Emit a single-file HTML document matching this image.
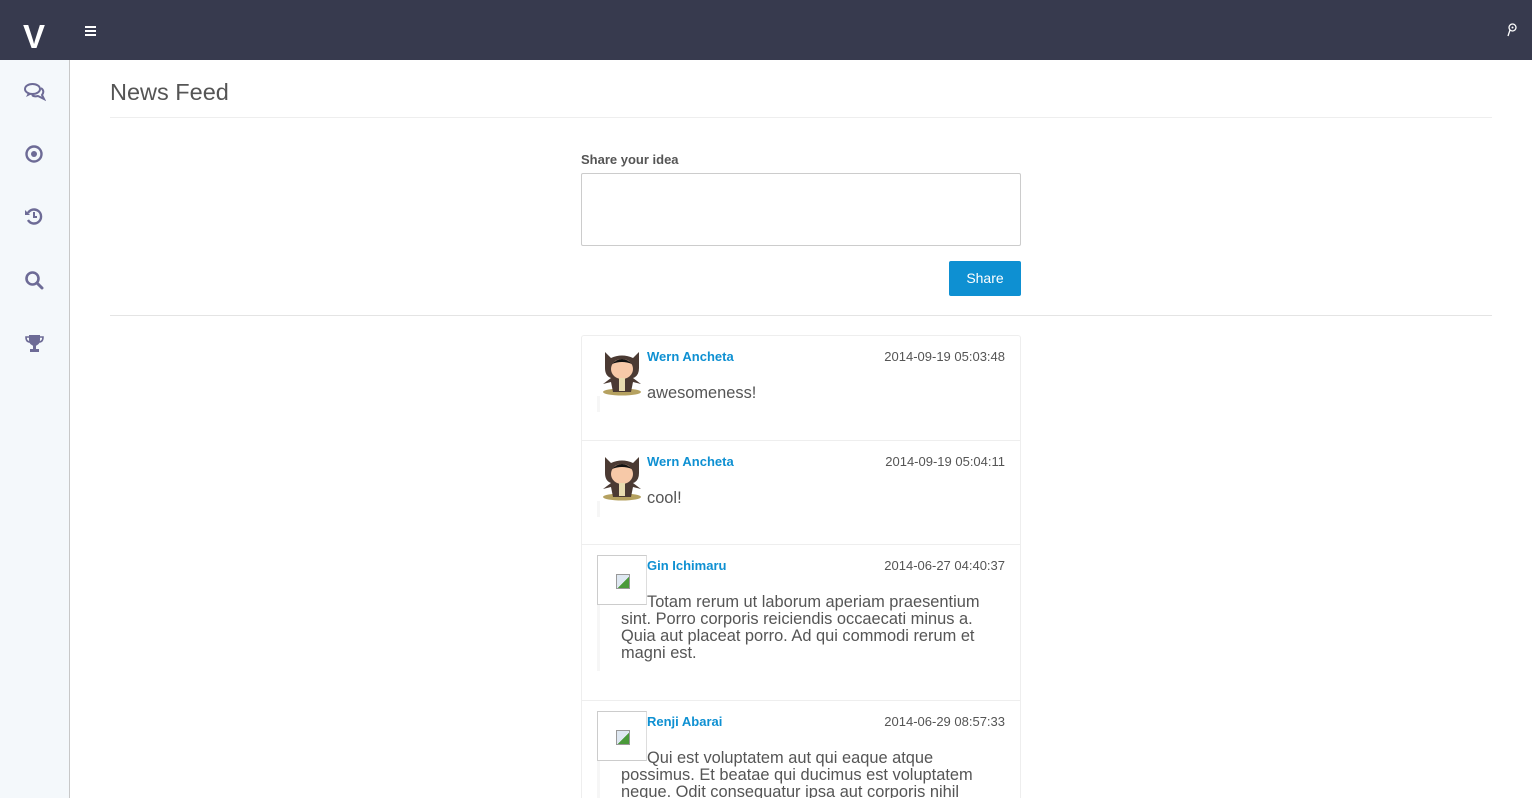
<!DOCTYPE html>
<html style="width:1532px;height:798px;overflow:hidden"><head><meta charset="utf-8"><style>
*{box-sizing:border-box;margin:0;padding:0}
body{width:1532px;height:798px;overflow:hidden;background:#fff;font-family:"Liberation Sans",sans-serif;color:#555;position:relative}
.top{position:absolute;left:0;top:0;width:1532px;height:60px;background:#373a4e}
.logo{position:absolute;left:23px;top:19px;color:#fff;font-weight:bold;font-size:33px;line-height:36px}
.burger{position:absolute;left:85px;top:26px;width:11px}
.burger i{display:block;height:2px;background:#fff;margin-bottom:2px}
.side{position:absolute;left:0;top:60px;width:70px;height:738px;background:#f4f8fb;border-right:1px solid #c8c8c8}
.side svg{position:absolute;left:24px}
h1{position:absolute;left:110px;top:79px;font-size:23.5px;font-weight:normal;color:#555}
.hr{position:absolute;left:110px;width:1382px;height:1px;background:#eee}
label{position:absolute;left:581px;top:152px;font-size:13px;font-weight:bold;color:#555}
.ta{position:absolute;left:581px;top:173px;width:440px;height:73px;border:1px solid #ccc;border-radius:2px}
.btn{position:absolute;left:949px;top:261px;width:72px;height:35px;background:#0e90d2;color:#fff;font-size:14px;text-align:center;line-height:35px;border-radius:2px}
.list{position:absolute;left:581px;top:335px;width:440px;height:463px;overflow:hidden;border:1px solid #eee;border-bottom:none;border-radius:3px 3px 0 0}
.item{position:absolute;left:0;width:438px;border-bottom:1px solid #eee}
.av{position:absolute;left:15px;top:10px;width:50px;height:50px}
.av.b{border:1px solid #ccc;border-right-color:#ddd}
.av.b::after{content:"";position:absolute;left:18px;top:18px;width:12px;height:13px;background:linear-gradient(135deg,#dfe8f2 55%,#4a9a3a 55%);border:1px solid #999}
.name{position:absolute;left:65px;top:13px;font-size:13px;font-weight:bold;color:#0e90d2}
.date{position:absolute;right:15px;top:13px;font-size:13px;color:#555}
.msg{position:absolute;left:39px;top:49px;width:375px;font-size:16.4px;line-height:17px;text-indent:26px;color:#555}
.bar{position:absolute;left:15px;width:3px;background:#f6f6f6}
</style></head><body>
<div class="top"><div class="logo">V</div><div class="burger"><i></i><i></i><i></i></div>
<svg style="position:absolute;left:1507px;top:23px" width="10" height="14" viewBox="0 0 10 14"><circle cx="5.5" cy="4.5" r="3.5" fill="none" stroke="#fff" stroke-width="1.3"/><path d="M3 7 L1 13" stroke="#fff" stroke-width="1.3"/><circle cx="5.5" cy="4.5" r="1" fill="#fff"/></svg></div>
<div class="side">
<svg style="top:22px" width="22" height="20" viewBox="0 0 22 20"><ellipse cx="8.5" cy="7" rx="7.5" ry="5" fill="none" stroke="#6d6b96" stroke-width="2"/><path d="M4 11 L2 15 L8 12" fill="#6d6b96"/><path d="M17 6 Q21 9 18 13 L20 17 L14 14 Q10 15 8 13" fill="none" stroke="#6d6b96" stroke-width="2"/></svg>
<svg style="top:84px" width="20" height="20" viewBox="0 0 20 20"><circle cx="10" cy="10" r="7.5" fill="none" stroke="#6d6b96" stroke-width="2.4"/><circle cx="10" cy="10" r="3" fill="#6d6b96"/></svg>
<svg style="top:146px" width="20" height="20" viewBox="0 0 20 20"><path d="M4 7 A7 7 0 1 1 4 14" fill="none" stroke="#6d6b96" stroke-width="2.4"/><path d="M1 4 L6 9 L1 9Z" fill="#6d6b96"/><path d="M10 6 V11 H13" fill="none" stroke="#6d6b96" stroke-width="2"/></svg>
<svg style="top:210px" width="20" height="20" viewBox="0 0 20 20"><circle cx="8.5" cy="8.5" r="6" fill="none" stroke="#6d6b96" stroke-width="2.6"/><path d="M13 13 L18 18" stroke="#6d6b96" stroke-width="3" stroke-linecap="round"/></svg>
<svg style="top:273px" width="21" height="20" viewBox="0 0 21 20"><path d="M5 2 H16 V7 Q16 12 10.5 13 Q5 12 5 7Z" fill="#6d6b96"/><path d="M5 4 H2 Q2 9 6 9 M16 4 H19 Q19 9 15 9" fill="none" stroke="#6d6b96" stroke-width="1.6"/><rect x="9" y="12" width="3" height="4" fill="#6d6b96"/><rect x="6" y="16" width="9" height="3" fill="#6d6b96"/></svg>
</div>
<h1>News Feed</h1>
<div class="hr" style="top:117px"></div>
<label>Share your idea</label>
<div class="ta"></div>
<div class="btn">Share</div>
<div class="hr" style="top:315px;background:#e4e4e4"></div>
<div class="list">
<div class="item" style="top:0;height:105px">
<svg class="av" viewBox="0 0 50 50"><ellipse cx="25" cy="46" rx="19" ry="3.5" fill="#b5a160"/><path d="M8 6 L14 12 Q25 7 36 12 L42 6 L42 22 Q42 30 36 32 L44 38 L36 36 L34 46 L16 46 L14 36 L6 38 L14 32 Q8 30 8 22Z" fill="#4b3a33"/><ellipse cx="25" cy="23" rx="11" ry="10" fill="#f7c9a8"/><path d="M15 18 Q25 8 35 18 Q25 14 15 18Z" fill="#111"/><rect x="22" y="32" width="6" height="13" fill="#e8dcb0"/></svg>
<div class="name">Wern Ancheta</div><div class="date">2014-09-19 05:03:48</div>
<div class="bar" style="top:60px;height:16px"></div>
<div class="msg">awesomeness!</div></div>
<div class="item" style="top:105px;height:104px">
<svg class="av" viewBox="0 0 50 50"><ellipse cx="25" cy="46" rx="19" ry="3.5" fill="#b5a160"/><path d="M8 6 L14 12 Q25 7 36 12 L42 6 L42 22 Q42 30 36 32 L44 38 L36 36 L34 46 L16 46 L14 36 L6 38 L14 32 Q8 30 8 22Z" fill="#4b3a33"/><ellipse cx="25" cy="23" rx="11" ry="10" fill="#f7c9a8"/><path d="M15 18 Q25 8 35 18 Q25 14 15 18Z" fill="#111"/><rect x="22" y="32" width="6" height="13" fill="#e8dcb0"/></svg>
<div class="name">Wern Ancheta</div><div class="date">2014-09-19 05:04:11</div>
<div class="bar" style="top:60px;height:16px"></div>
<div class="msg">cool!</div></div>
<div class="item" style="top:209px;height:156px">
<div class="av b"></div>
<div class="name">Gin Ichimaru</div><div class="date">2014-06-27 04:40:37</div>
<div class="bar" style="top:60px;height:66px"></div>
<div class="msg">Totam rerum ut laborum aperiam praesentium sint. Porro corporis reiciendis occaecati minus a. Quia aut placeat porro. Ad qui commodi rerum et magni est.</div></div>
<div class="item" style="top:365px;height:156px;border-bottom:none">
<div class="av b"></div>
<div class="name">Renji Abarai</div><div class="date">2014-06-29 08:57:33</div>
<div class="bar" style="top:60px;height:66px"></div>
<div class="msg">Qui est voluptatem aut qui eaque atque possimus. Et beatae qui ducimus est voluptatem neque. Odit consequatur ipsa aut corporis nihil</div></div>
</div>
</body></html>
